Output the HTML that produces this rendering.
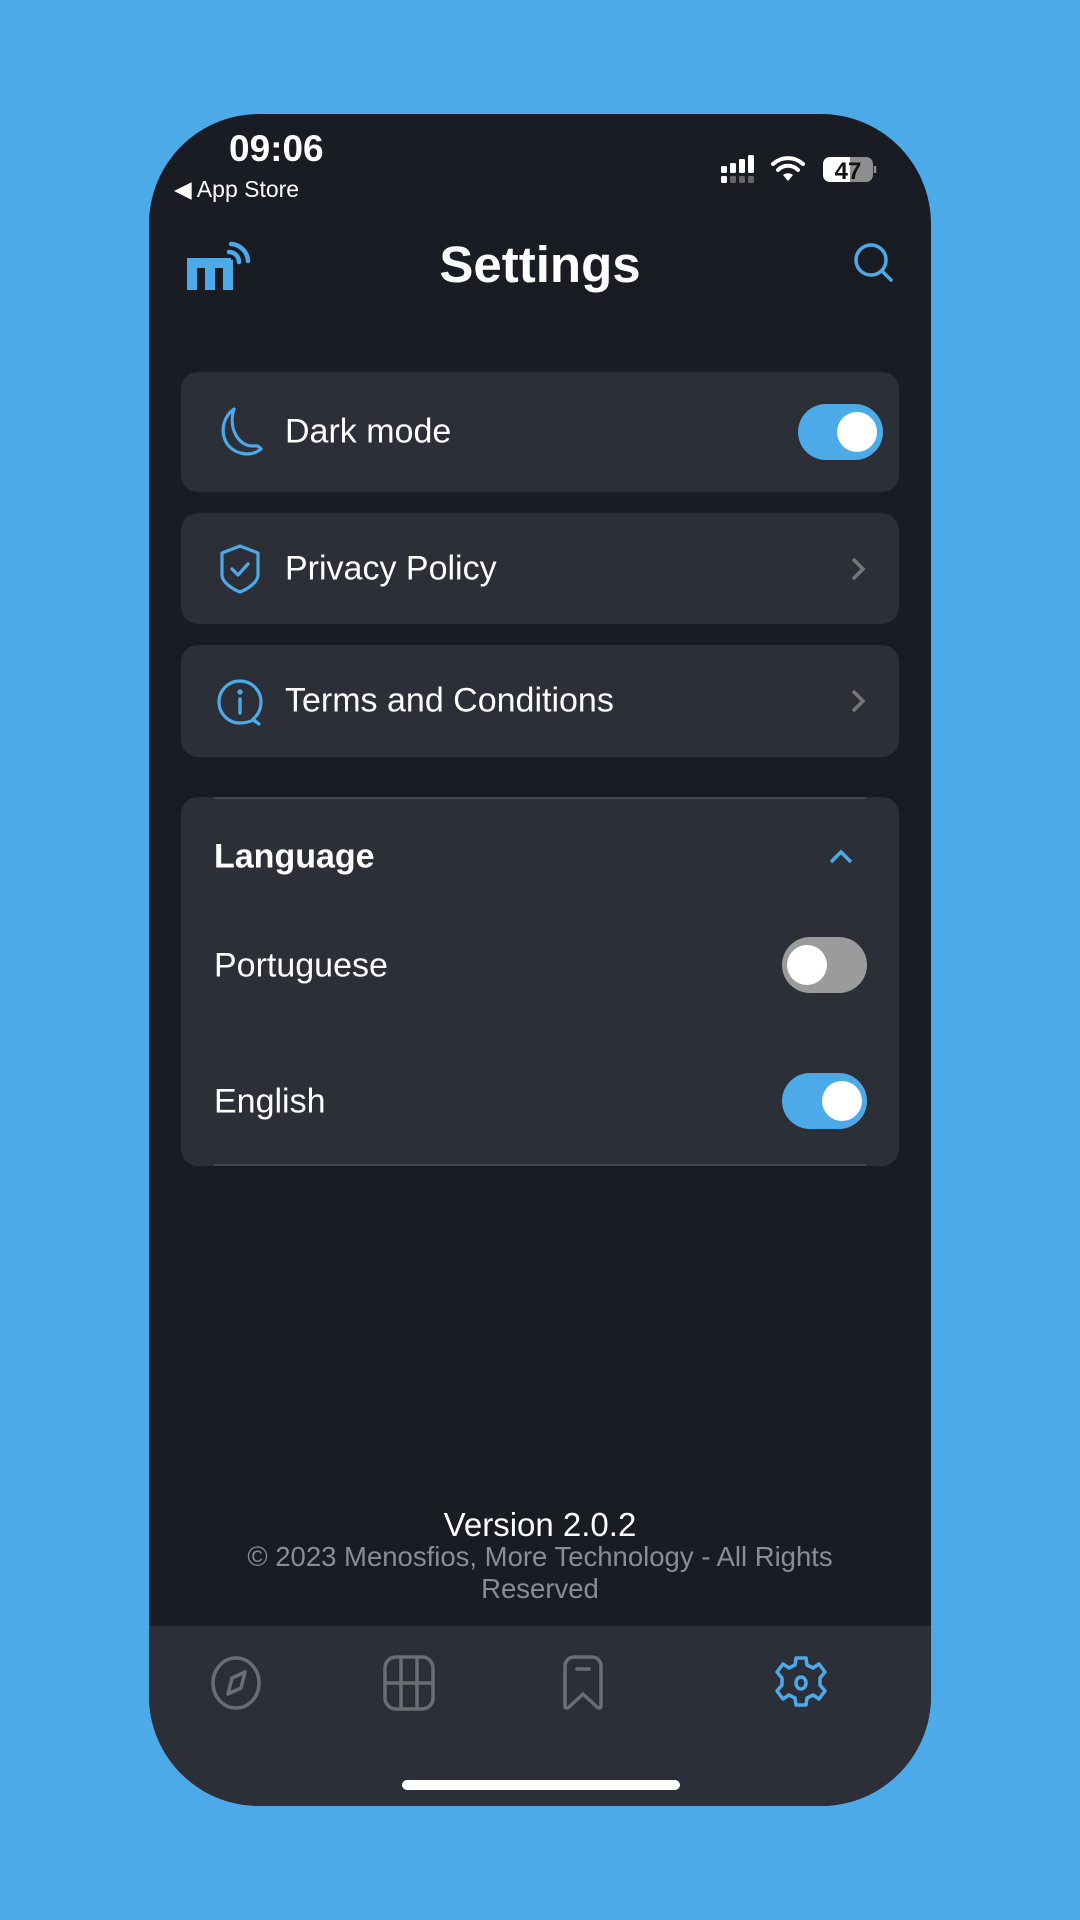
<!DOCTYPE html>
<html><head><meta charset="utf-8"><style>
*{margin:0;padding:0;box-sizing:border-box}
body{width:1080px;height:1920px;background:#4DAAE8;position:relative;overflow:hidden;font-family:"Liberation Sans",sans-serif;color:#fff}
.phone{position:absolute;left:149px;top:114px;width:782px;height:1692px;background:#1a1c23;border-radius:110px;overflow:hidden}
.abs{position:absolute}
.card{position:absolute;left:32px;width:718px;background:#2c2f38;border-radius:17px}
.lbl{position:absolute;left:104px;font-size:34px;transform:translateY(-50%)}
.tog{position:absolute;width:85px;height:56px;border-radius:28px;background:#4DAAE8}
.tog i{position:absolute;top:8px;width:40px;height:40px;border-radius:50%;background:#fff}
.chev{position:absolute;left:668px}
</style></head><body>
<div class="phone">
 <div class="abs" style="left:80px;top:14px;font-size:37px;font-weight:bold">09:06</div>
 <div class="abs" style="left:25px;top:62px;font-size:23px">◀ App Store</div>
 <svg class="abs" style="left:570px;top:38px" width="160" height="34" viewBox="0 0 160 34">
  <rect x="2" y="14" width="6" height="7" rx="1.5" fill="#fff"/><rect x="11" y="11" width="6" height="10" rx="1.5" fill="#fff"/><rect x="20" y="7" width="6" height="14" rx="1.5" fill="#fff"/><rect x="29" y="3" width="6" height="18" rx="1.5" fill="#fff"/>
  <rect x="2" y="24" width="6" height="7" rx="1.5" fill="#fff"/><rect x="11" y="24" width="6" height="7" rx="1.5" fill="#666"/><rect x="20" y="24" width="6" height="7" rx="1.5" fill="#666"/><rect x="29" y="24" width="6" height="7" rx="1.5" fill="#666"/>
  <path d="M54 12a22 22 0 0 1 30 0M59 18a14 14 0 0 1 20 0" stroke="#fff" stroke-width="4" fill="none" stroke-linecap="round"/><path d="M64 23l5 6 5-6a8 8 0 0 0-10 0z" fill="#fff"/>
  <rect x="104" y="5" width="50" height="25" rx="7" fill="#8e8e8e"/><rect x="104" y="5" width="26" height="25" rx="7" fill="#fff"/><rect x="123" y="5" width="8" height="25" fill="#fff"/>
  <path d="M156 14v7" stroke="#8e8e8e" stroke-width="2.5"/>
  <text x="129" y="27" font-size="24" font-weight="bold" fill="#111" text-anchor="middle" font-family="Liberation Sans">47</text>
 </svg>
 <svg class="abs" style="left:36px;top:124px" width="68" height="56" viewBox="0 0 68 56">
  <rect x="2" y="22" width="10" height="30" fill="#4DAAE8"/><rect x="2" y="20" width="44" height="10" fill="#4DAAE8"/><rect x="20" y="22" width="10" height="30" fill="#4DAAE8"/><rect x="38" y="22" width="10" height="30" fill="#4DAAE8"/>
  <path d="M44 14a10 10 0 0 1 10 10M46 6a18 18 0 0 1 17 17" stroke="#4DAAE8" stroke-width="4.5" fill="none" stroke-linecap="round"/>
 </svg>
 <div class="abs" style="left:0;width:782px;top:121px;text-align:center;font-size:51px;font-weight:bold">Settings</div>
 <svg class="abs" style="left:704px;top:128px" width="42" height="42" viewBox="0 0 42 42"><circle cx="18" cy="18" r="15" stroke="#4DAAE8" stroke-width="3.5" fill="none"/><path d="M29 29l9 9" stroke="#4DAAE8" stroke-width="3.5" stroke-linecap="round"/></svg>

 <div class="card" style="top:258px;height:120px">
  <svg class="abs" style="left:35px;top:34px" width="50" height="52" viewBox="0 0 50 52"><path d="M18 3C8 10 4 24 10 36c7 12 24 16 35 7c-3-4-4-3-8-3C22 40 12 22 18 3z" stroke="#4DAAE8" stroke-width="3.2" fill="none" stroke-linejoin="round"/></svg>
  <div class="lbl" style="top:60px">Dark mode</div>
  <div class="tog" style="left:617px;top:32px"><i style="left:39px"></i></div>
 </div>
 <div class="card" style="top:399px;height:111px">
  <svg class="abs" style="left:36px;top:30px" width="46" height="52" viewBox="0 0 46 52"><path d="M23 3L41 10v22c0 7-10 14-18 17C15 46 5 39 5 32V10z" stroke="#4DAAE8" stroke-width="3.2" fill="none" stroke-linejoin="round"/><path d="M15 26l6 6 10-11" stroke="#4DAAE8" stroke-width="3.2" fill="none" stroke-linecap="round" stroke-linejoin="round"/></svg>
  <div class="lbl" style="top:56px">Privacy Policy</div>
  <svg class="chev" style="top:43px" width="18" height="26" viewBox="0 0 18 26"><path d="M4 3l10 10-10 10" stroke="#777" stroke-width="3.5" fill="none"/></svg>
 </div>
 <div class="card" style="top:531px;height:112px">
  <svg class="abs" style="left:34px;top:32px" width="50" height="52" viewBox="0 0 50 52"><path d="M38 42c5-4 8-10 8-17A21 21 0 1 0 25 46c5 0 9-1 13-3l6 4z" stroke="#4DAAE8" stroke-width="3.2" fill="none" stroke-linejoin="round"/><circle cx="25" cy="15" r="2.6" fill="#4DAAE8"/><path d="M25 22v14" stroke="#4DAAE8" stroke-width="3.4" stroke-linecap="round"/></svg>
  <div class="lbl" style="top:56px">Terms and Conditions</div>
  <svg class="chev" style="top:43px" width="18" height="26" viewBox="0 0 18 26"><path d="M4 3l10 10-10 10" stroke="#777" stroke-width="3.5" fill="none"/></svg>
 </div>
 <div class="card" style="top:683px;height:369px">
  <div class="abs" style="left:33px;right:33px;top:0;height:2px;background:#44474f"></div>
  <div class="abs" style="left:33px;right:33px;bottom:0;height:2px;background:#44474f"></div>
  <div class="lbl" style="left:33px;top:60px;font-weight:bold">Language</div>
  <svg class="abs" style="left:646px;top:51px" width="28" height="18" viewBox="0 0 28 18"><path d="M4 14l10-10 10 10" stroke="#4DAAE8" stroke-width="3.5" fill="none"/></svg>
  <div class="lbl" style="left:33px;top:169px">Portuguese</div>
  <div class="tog" style="left:601px;top:140px;background:#9b9b9b"><i style="left:5px"></i></div>
  <div class="lbl" style="left:33px;top:305px">English</div>
  <div class="tog" style="left:601px;top:276px"><i style="left:40px"></i></div>
 </div>

 <div class="abs" style="left:0;width:782px;top:1392px;text-align:center;font-size:33px">Version 2.0.2</div>
 <div class="abs" style="left:60px;width:662px;top:1427px;text-align:center;font-size:27.5px;line-height:32px;color:#8a8d93">© 2023 Menosfios, More Technology - All Rights Reserved</div>

 <div class="abs" style="left:0;top:1512px;width:782px;height:180px;background:#2c2f38"></div>
 <svg class="abs" style="left:60px;top:1540px" width="54" height="58" viewBox="0 0 54 58"><ellipse cx="27" cy="29" rx="23" ry="25" stroke="#6b6d72" stroke-width="3.5" fill="none"/><path d="M19 40l4-16 13-6-4 16z" stroke="#6b6d72" stroke-width="3.5" fill="none" stroke-linejoin="round"/></svg>
 <svg class="abs" style="left:233px;top:1540px" width="56" height="58" viewBox="0 0 56 58"><rect x="3" y="3" width="48" height="52" rx="11" stroke="#6b6d72" stroke-width="3.5" fill="none"/><path d="M19 3v52M35 3v52M3 29h48" stroke="#6b6d72" stroke-width="3.5"/></svg>
 <svg class="abs" style="left:412px;top:1540px" width="44" height="58" viewBox="0 0 44 58"><path d="M4 52V12a9 9 0 0 1 9-9h18a9 9 0 0 1 9 9v40c0 2-2 3-4 1L22 40 8 53c-2 2-4 1-4-1z" stroke="#6b6d72" stroke-width="3.5" fill="none" stroke-linejoin="round"/><path d="M16 15h12" stroke="#6b6d72" stroke-width="3.5" stroke-linecap="round"/></svg>
 <svg class="abs" style="left:625px;top:1540px" width="54" height="58" viewBox="0 0 54 58"><path d="M22 4h10l1 7 6 3 6-4 6 8-5 6v7l5 6-6 8-6-4-6 3-1 7H22l-1-7-6-3-6 4-6-8 5-6v-7l-5-6 6-8 6 4 6-3z" stroke="#4DAAE8" stroke-width="3.5" fill="none" stroke-linejoin="round"/><ellipse cx="27" cy="29" rx="5" ry="6" stroke="#4DAAE8" stroke-width="3.5" fill="none"/></svg>
 <div class="abs" style="left:253px;top:1666px;width:278px;height:10px;border-radius:5px;background:#fff"></div>
</div>
</body></html>
